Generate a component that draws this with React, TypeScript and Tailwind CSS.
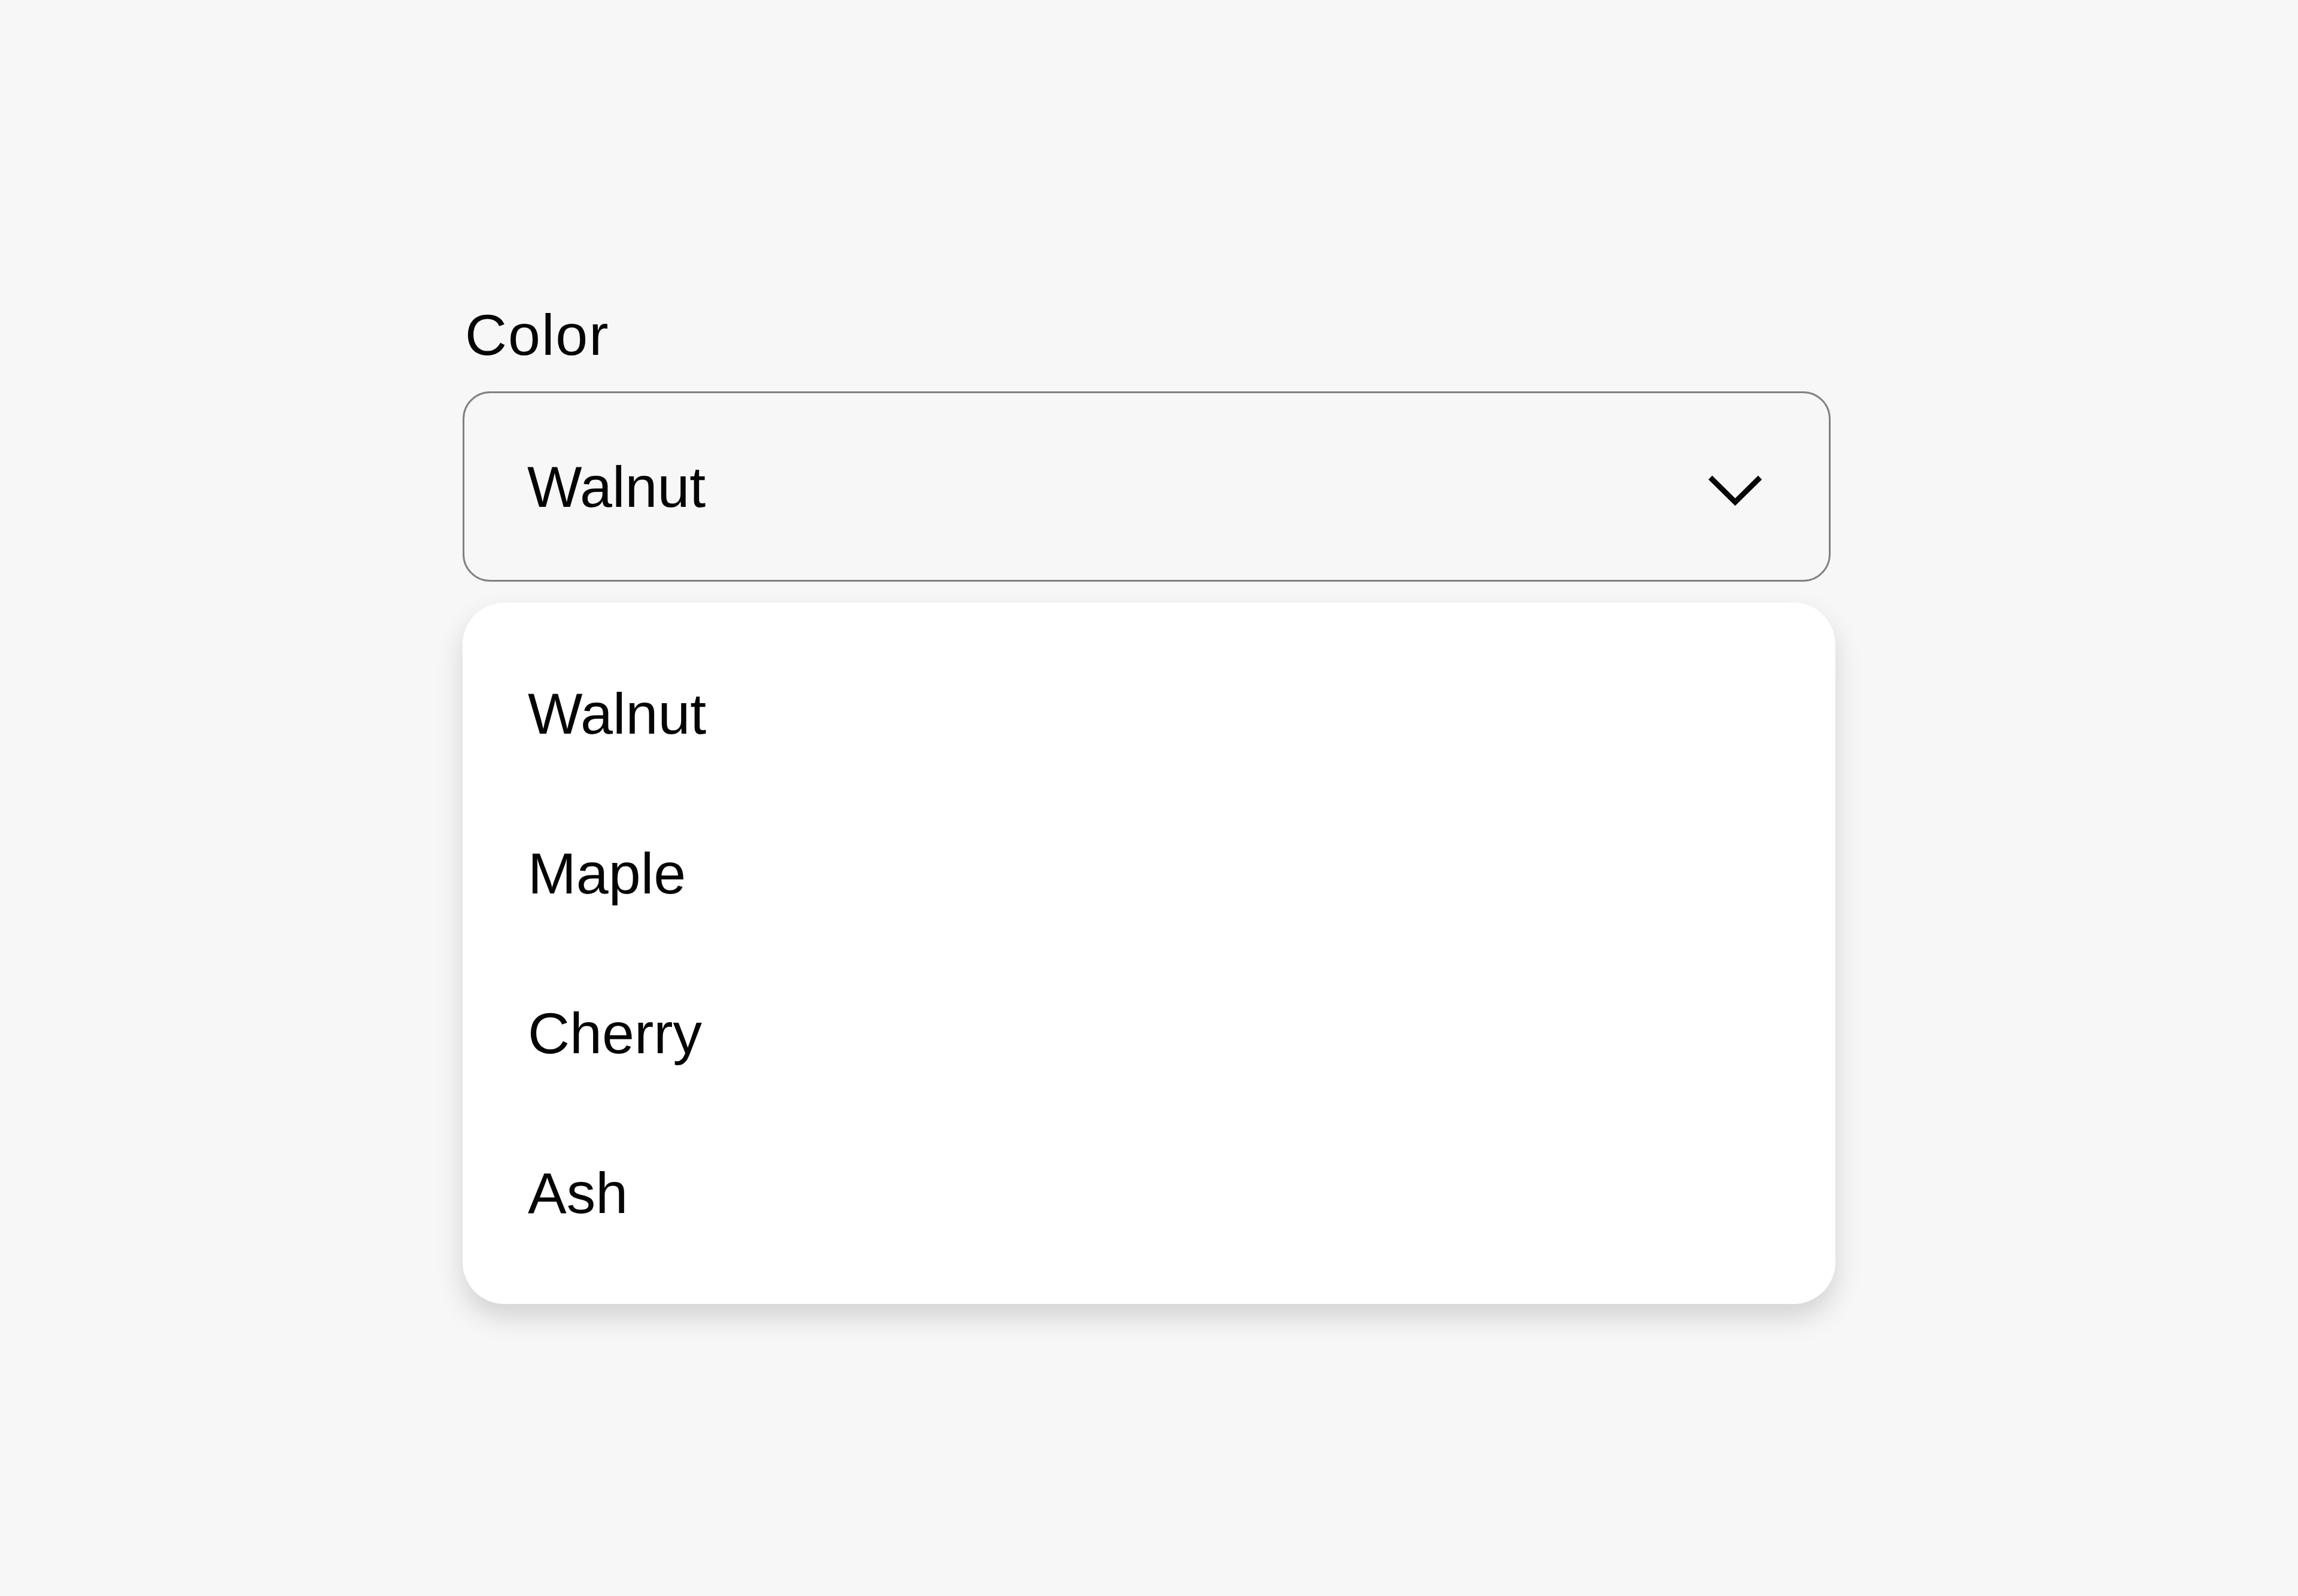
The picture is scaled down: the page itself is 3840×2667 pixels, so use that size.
import React from "react";

const items = ["Walnut", "Maple", "Cherry", "Ash"];

export default function App() {
  return (
    <div
      className="w-full min-h-[2667px] bg-[#f7f7f7] text-[#050505]"
      style={{ fontFamily: '"Liberation Sans", Arial, sans-serif' }}
    >
      <div className="w-[2294px] mx-auto pt-[511px]">
        <div className="text-[97px] leading-[97px] tracking-[0.02em] pl-[4px]">Color</div>
        <div className="mt-[46px] w-[2286px] h-[318px] border-[3px] border-[#818181] rounded-[46px] flex items-center justify-between pl-[105px] pr-[110px]">
          <span className="text-[97px] leading-[97px]">Walnut</span>
          <svg width="93" height="55" viewBox="0 0 93 55" className="mt-[13px] overflow-visible" fill="none">
            <polyline points="5,6 46.5,47 88,6" stroke="#050505" strokeWidth="9" strokeLinejoin="miter" strokeLinecap="butt" />
          </svg>
        </div>
        <div className="mt-[35px] w-[2294px] bg-white rounded-[70px] shadow-[0_22px_46px_rgba(0,0,0,0.15)] py-[52px]">
          {items.map((it) => (
            <div key={it} className="h-[267px] flex items-center pl-[109px]">
              <span className="text-[97px] leading-[97px]">{it}</span>
            </div>
          ))}
        </div>
      </div>
    </div>
  );
}
